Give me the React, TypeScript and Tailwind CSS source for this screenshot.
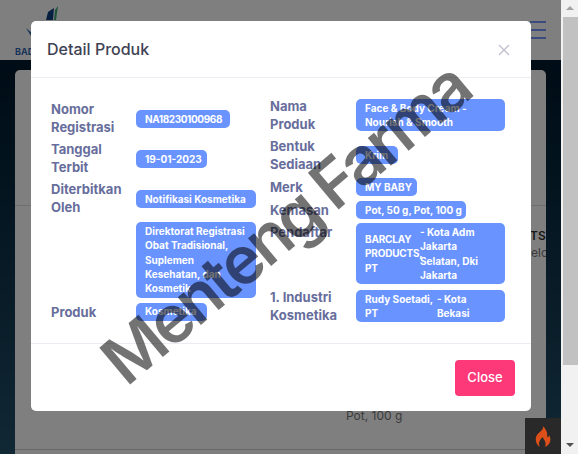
const font = { fontFamily: '"Inter", "Liberation Sans", sans-serif' };

function Label({ children }: { children: React.ReactNode }) {
  return <div className="text-[13px] leading-[18px] font-bold text-[#676e9c]">{children}</div>;
}

function Badge({ children, className = '' }: { children: React.ReactNode; className?: string }) {
  return (
    <div className={`rounded-[5px] bg-[#6993ff] px-[9px] py-[1.8px] text-[10px] leading-[14.4px] font-bold whitespace-nowrap text-white ${className}`}>
      {children}
    </div>
  );
}

export default function App() {
  return (
    <div className="relative h-[454px] w-[578px] overflow-hidden bg-[#f1f1f1]" style={font}>
      {/* page behind the modal */}
      <div className="flex h-full w-[561px] flex-col">
        <div className="relative h-[60px] shrink-0 bg-white">
          <div className="absolute left-[15px] top-[45px] text-[9px] font-bold text-[#2f66b0]">BADAN</div>
          <svg className="absolute left-[24px] top-[4px]" width="40" height="34" viewBox="0 0 40 34">
            <path d="M22 16 L24 8 L30 4 L29 16 Z" fill="#0f3f80" />
            <path d="M30 16 L31 6 L34 2 L32 16 Z" fill="#3da875" />
            <path d="M2 24 L7 32 L8 29 Z" fill="#2f66b0" />
          </svg>
          <div className="absolute left-[530px] top-[21px] flex w-[16px] flex-col gap-[6px]">
            <div className="h-[2px] bg-[#7694ff]" />
            <div className="h-[2px] bg-[#7694ff]" />
            <div className="h-[2px] bg-[#7694ff]" />
          </div>
        </div>
        <div className="flex-1 bg-gradient-to-b from-[#00182c] to-[#22506a] px-[15px] pt-[10px]">
          <div className="h-full rounded-t-[5px] bg-white">
            <div className="h-[136px] border-b border-[#ddd]" />
            <div className="relative h-[244px] overflow-hidden border-b border-[#ccc] text-[12px] text-[#777]">
              <div className="absolute left-[515px] top-[21px] font-semibold text-[#333]">TS,</div>
              <div className="absolute left-[516px] top-[38px]">elo</div>
              <div className="absolute left-[331px] top-[201px]">Pot, 100 g</div>
            </div>
          </div>
        </div>
      </div>

      {/* backdrop */}
      <div className="absolute inset-0 bg-black/50" />

      {/* scrollbar, not dimmed */}
      <div className="absolute right-0 top-0 flex h-full w-[17px] flex-col items-center bg-[#f1f1f1] pt-[6px]">
        <div className="h-0 w-0 border-x-[4px] border-b-[4px] border-x-transparent border-b-[#a3a3a3]" />
        <div className="mt-[7px] ml-[2px] h-[348px] w-[15px] bg-[#c1c1c1]" />
        <div className="mt-auto mb-[7px] h-0 w-0 border-x-[4px] border-t-[4px] border-x-transparent border-t-[#505050]" />
      </div>

      {/* flame widget */}
      <div className="absolute left-[525px] top-[418px] flex h-[36px] w-[36px] items-center justify-center bg-[#292929]">
        <svg width="16" height="21" viewBox="0 0 16 21">
          <path
            fillRule="evenodd"
            d="M8 0 C9 4 4 6 2 9 C0 12 0 18 5 21 C3 18 4 14 8 11 C8 14 12 15 10 21 C15 19 17 14 14 9 C14 11 13 11 12 11 C13 7 11 3 8 0 Z"
            fill="#dc4f19"
          />
        </svg>
      </div>

      {/* modal */}
      <div className="absolute left-[31px] top-[21px] flex h-[390px] w-[500px] flex-col rounded-[5px] bg-white">
        <div className="flex h-[57px] shrink-0 items-center justify-between border-b border-[#ebedf3] pl-[16px] pr-[21px]">
          <div className="text-[16px] font-medium text-[#3f4254]">Detail Produk</div>
          <svg width="12" height="12" viewBox="0 0 12 12" className="mt-[2px]">
            <path d="M1 1 L11 11 M11 1 L1 11" stroke="#c0c0cf" strokeWidth="1.4" />
          </svg>
        </div>
        <div className="grid flex-1 grid-cols-[205px_235px] items-start gap-x-[14px] pl-[20px]">
          <div className="flex flex-col gap-[4px] pt-[22px]">
            <div className="grid grid-cols-[85px_120px] items-center">
              <Label>Nomor<br />Registrasi</Label>
              <Badge className="mt-[2px] w-[94px] tracking-[-0.4px]">NA18230100968</Badge>
            </div>
            <div className="grid grid-cols-[85px_120px] items-center">
              <Label>Tanggal<br />Terbit</Label>
              <Badge className="mt-[2px] w-[71px]">19-01-2023</Badge>
            </div>
            <div className="grid grid-cols-[85px_120px] items-center">
              <Label>Diterbitkan<br />Oleh</Label>
              <Badge className="mt-[2px]">Notifikasi Kosmetika</Badge>
            </div>
            <div className="mt-[2px] grid grid-cols-[85px_120px]">
              <div />
              <Badge>Direktorat Registrasi<br />Obat Tradisional,<br />Suplemen<br />Kesehatan, dan<br />Kosmetik</Badge>
            </div>
            <div className="mt-[1px] grid grid-cols-[85px_120px] items-center">
              <Label>Produk</Label>
              <Badge className="w-[71px]">Kosmetika</Badge>
            </div>
          </div>
          <div className="flex flex-col gap-[4px] pt-[19px]">
            <div className="grid grid-cols-[86px_149px] items-center">
              <Label>Nama<br />Produk</Label>
              <Badge>Face &amp; Body Cream -<br />Nourish &amp; Smooth</Badge>
            </div>
            <div className="grid grid-cols-[86px_149px] items-center">
              <Label>Bentuk<br />Sediaan</Label>
              <Badge className="w-[42px]">Krim</Badge>
            </div>
            <div className="mt-[1px] grid grid-cols-[86px_149px] items-center">
              <Label>Merk</Label>
              <Badge className="w-[61px]">MY BABY</Badge>
            </div>
            <div className="mt-[1px] grid grid-cols-[86px_149px] items-center">
              <Label>Kemasan</Label>
              <Badge className="w-[110px]">Pot, 50 g, Pot, 100 g</Badge>
            </div>
            <div className="grid grid-cols-[86px_149px]">
              <Label>Pendaftar</Label>
              <Badge className="flex">
                <div className="w-[55px] self-center tracking-[-0.2px]">BARCLAY<br />PRODUCTS,<br />PT</div>
                <div>- Kota Adm<br />Jakarta<br />Selatan, Dki<br />Jakarta</div>
              </Badge>
            </div>
            <div className="grid grid-cols-[86px_149px] items-center">
              <Label>1. Industri<br />Kosmetika</Label>
              <Badge className="flex">
                <div className="w-[72px]">Rudy Soetadi,<br />PT</div>
                <div>- Kota<br />Bekasi</div>
              </Badge>
            </div>
          </div>
        </div>
        <div className="flex h-[68px] shrink-0 items-center justify-end border-t border-[#ebedf3] pr-[16px]">
          <button className="h-[36px] w-[60px] rounded-[4px] bg-[#fd397a] text-[13px] font-medium text-white">
            Close
          </button>
        </div>
      </div>

      {/* watermark */}
      <div className="pointer-events-none absolute left-[289px] top-[227px] h-0 w-0">
        <div className="absolute left-[-264px] top-[-54px] w-[520px] -rotate-[40deg] whitespace-nowrap text-center text-[66px] leading-[100px] font-semibold tracking-[-3.5px] text-black/55">
          Menteng Farma
        </div>
      </div>
    </div>
  );
}
